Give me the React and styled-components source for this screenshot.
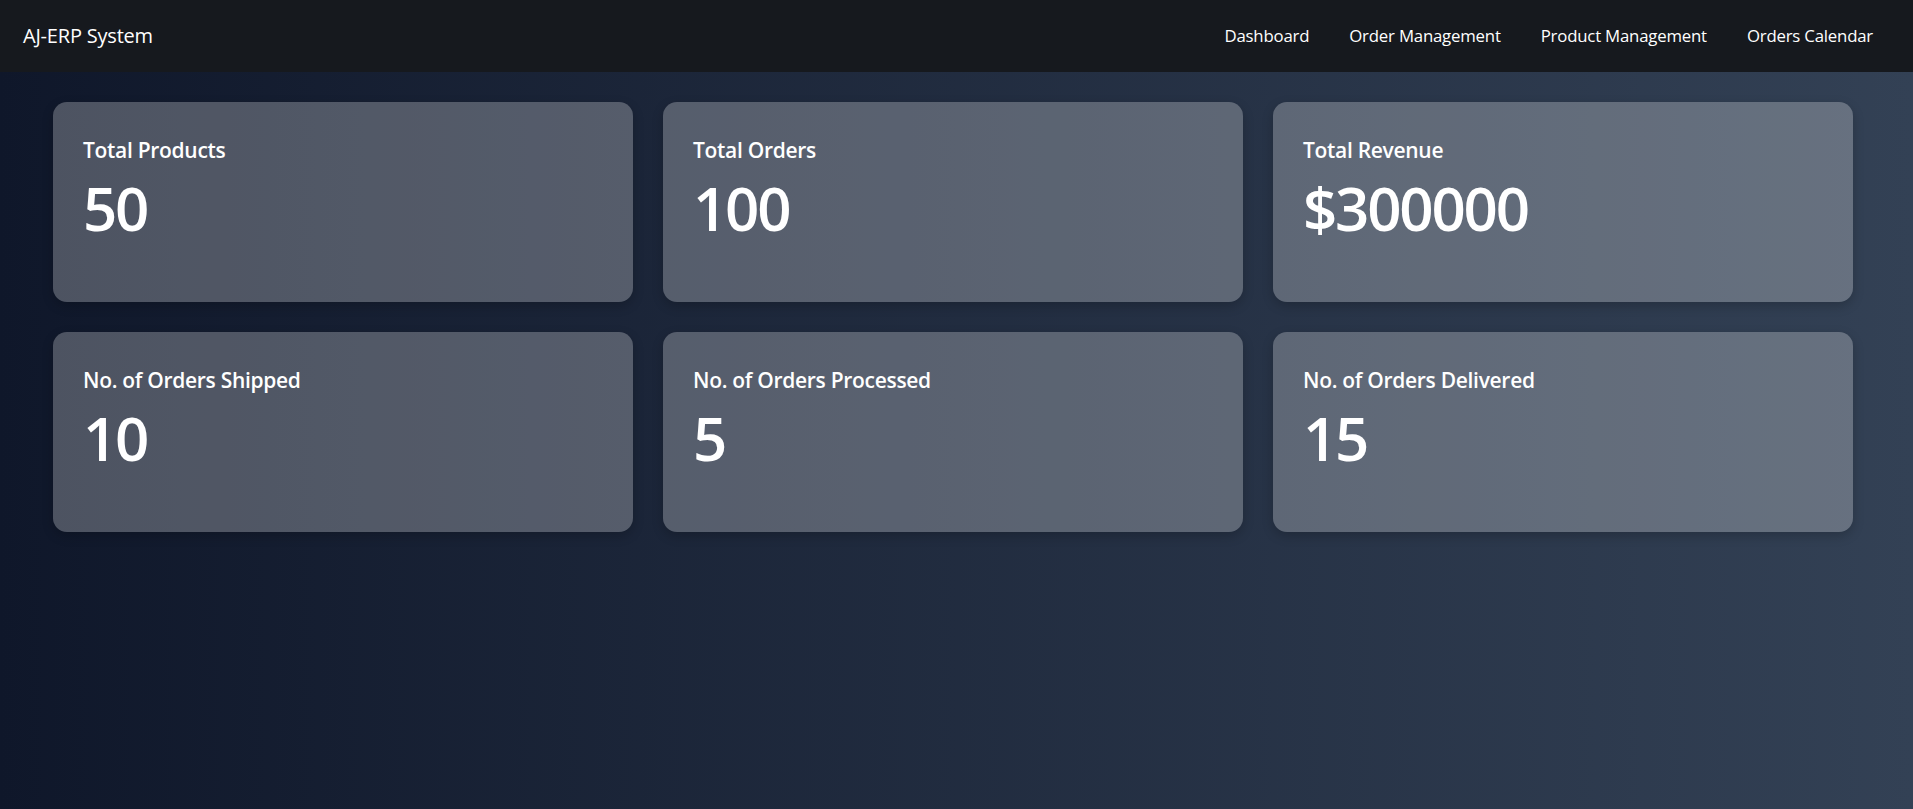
import React from 'react'
import styled, { createGlobalStyle } from 'styled-components'

const GlobalStyle = createGlobalStyle`
  * {
    box-sizing: border-box;
  }

  body {
    margin: 0;
    font-family: "Segoe UI", "Open Sans", "Noto Sans", sans-serif;
    color: #fff;
  }
`

const Page = styled.div`
  min-height: 100vh;
  display: flex;
  flex-direction: column;
  background: linear-gradient(to right, #0f172a, #334155);
`

const Navbar = styled.nav`
  height: 72px;
  background-color: #16191e;
  display: flex;
  align-items: center;
  justify-content: space-between;
  padding: 0 40px 2px 23px;
`

const Brand = styled.a`
  color: #fff;
  font-size: 20px;
  text-decoration: none;
  letter-spacing: -0.2px;
`

const NavLinks = styled.div`
  display: flex;
  gap: 40px;
`

const NavLink = styled.a`
  color: #fff;
  font-size: 16.8px;
  text-decoration: none;
  letter-spacing: -0.2px;
`

const Grid = styled.main`
  display: grid;
  grid-template-columns: repeat(3, 1fr);
  gap: 30px;
  padding: 30px 60px 30px 53px;
`

const Card = styled.div`
  height: 200px;
  padding: 34px 30px;
  border-radius: 14px;
  background-color: rgba(255, 255, 255, 0.26);
  box-shadow: 0 4px 12px rgba(0, 0, 0, 0.2);
`

const Title = styled.h3`
  margin: 0;
  font-size: 21px;
  font-weight: 600;
  letter-spacing: -0.3px;
`

const Value = styled.p`
  margin: 8px 0 0;
  font-size: 60px;
  font-weight: 600;
  line-height: 1.2;
  letter-spacing: -2.2px;
`

const stats = [
  { title: 'Total Products', value: '50' },
  { title: 'Total Orders', value: '100' },
  { title: 'Total Revenue', value: '$300000' },
  { title: 'No. of Orders Shipped', value: '10' },
  { title: 'No. of Orders Processed', value: '5' },
  { title: 'No. of Orders Delivered', value: '15' },
]

function StatCard({ title, value }) {
  return (
    <Card>
      <Title>{title}</Title>
      <Value>{value}</Value>
    </Card>
  )
}

export default function App() {
  return (
    <>
      <GlobalStyle />
      <Page>
        <Navbar>
          <Brand href="#">AJ-ERP System</Brand>
          <NavLinks>
            <NavLink href="#">Dashboard</NavLink>
            <NavLink href="#">Order Management</NavLink>
            <NavLink href="#">Product Management</NavLink>
            <NavLink href="#">Orders Calendar</NavLink>
          </NavLinks>
        </Navbar>
        <Grid>
          {stats.map((s) => (
            <StatCard key={s.title} title={s.title} value={s.value} />
          ))}
        </Grid>
      </Page>
    </>
  )
}
